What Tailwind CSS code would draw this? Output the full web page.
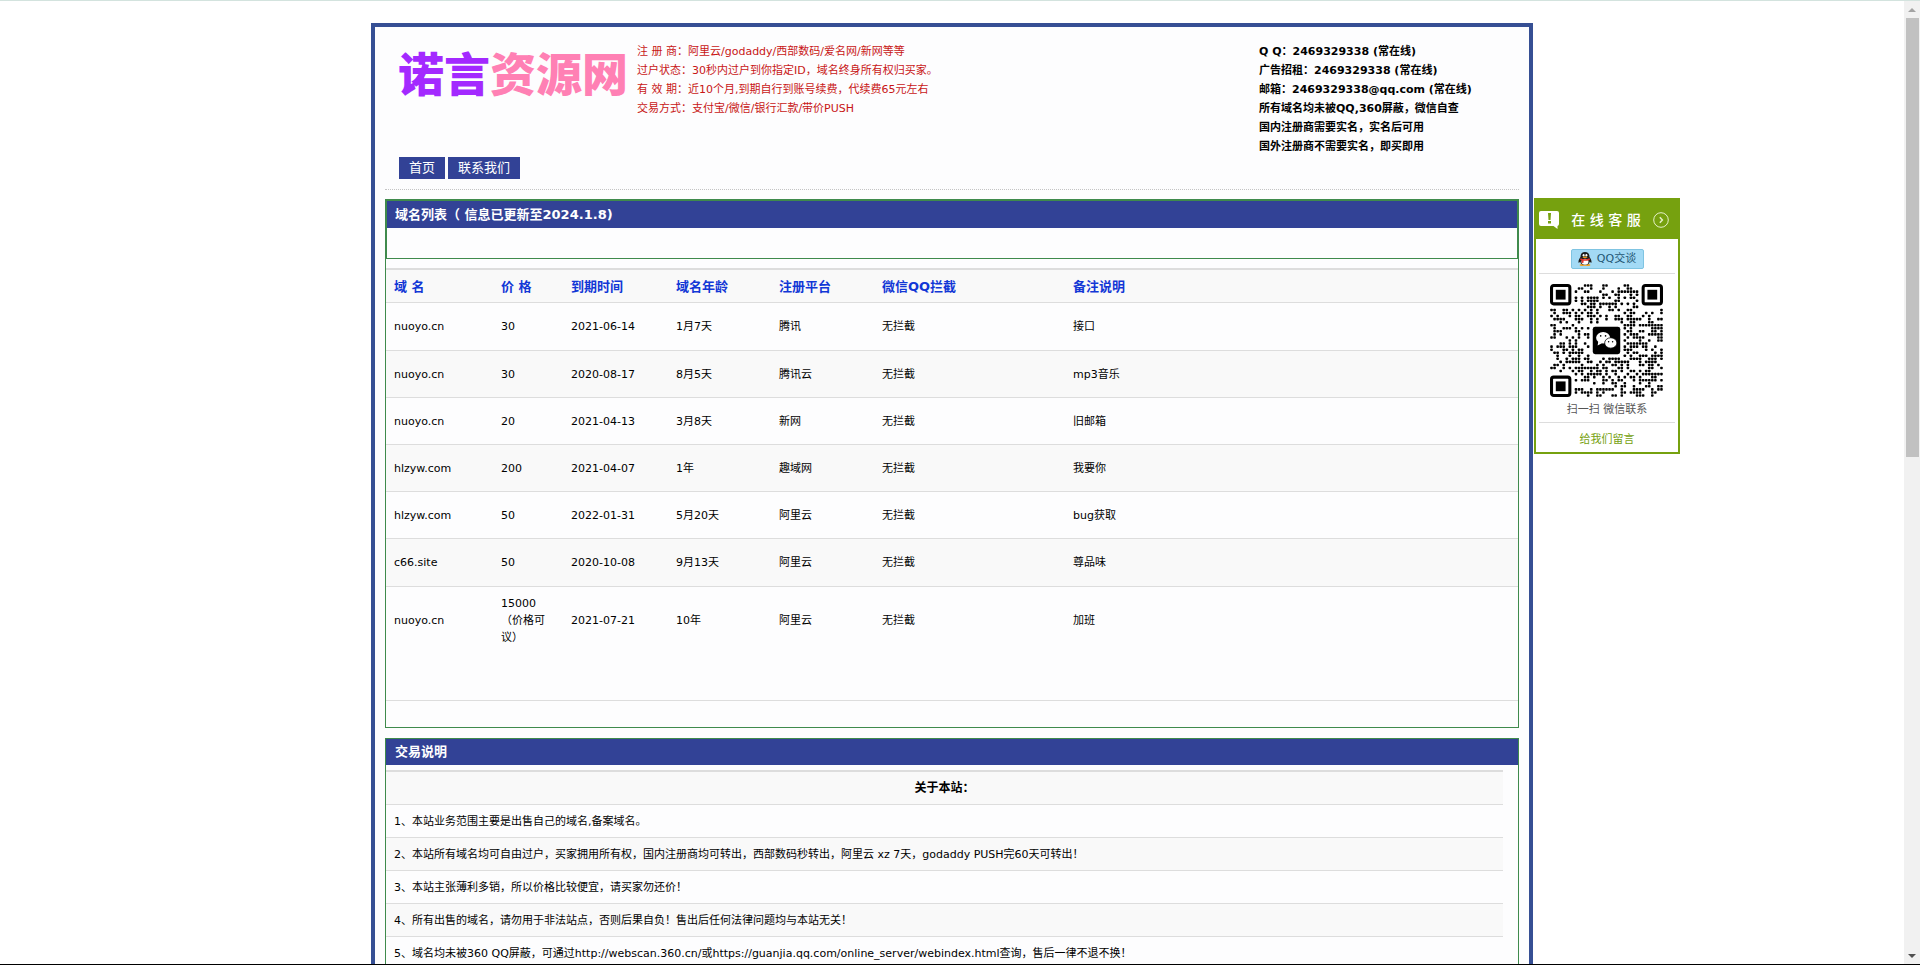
<!DOCTYPE html>
<html lang="zh-CN">
<head>
<meta charset="utf-8">
<title>诺言资源网</title>
<script src="https://cdn.jsdelivr.net/npm/@tailwindcss/browser@4"></script>
</head>
<body class="flex h-screen flex-col overflow-hidden border-t border-[#d3e3de] bg-white font-['DejaVu_Sans','Noto_Sans_CJK_SC',sans-serif] text-[11px] leading-[17px] text-black">
<div class="flex min-h-0 flex-1">
  <div class="min-w-0 flex-1 overflow-hidden pt-[22px]">
    <div class="relative mx-auto w-full max-w-[1162px] border-4 border-[#364f94] bg-[#fdfdfe] p-[10px]">
      <header class="flex h-[120px] items-start pt-[5px] pl-[13px] leading-[19px]">
        <h1 class="w-[239px] shrink-0 pt-[5px] text-[46px] leading-[56px] font-black text-[#ff80b4] whitespace-nowrap"><span class="text-[#a329ff]">诺言</span>资源网</h1>
        <div class="flex-1 text-[#c81616]">
          <p>注 册 商：阿里云/godaddy/西部数码/爱名网/新网等等</p>
          <p>过户状态：30秒内过户到你指定ID，域名终身所有权归买家。</p>
          <p>有 效 期：近10个月,到期自行到账号续费，代续费65元左右</p>
          <p>交易方式：支付宝/微信/银行汇款/带价PUSH</p>
        </div>
        <div class="w-[260px] shrink-0 font-bold whitespace-nowrap">
          <p>Q Q：2469329338 (常在线)</p>
          <p>广告招租：2469329338 (常在线)</p>
          <p>邮箱：2469329338@qq.com (常在线)</p>
          <p>所有域名均未被QQ,360屏蔽，微信自查</p>
          <p>国内注册商需要实名，实名后可用</p>
          <p>国外注册商不需要实名，即买即用</p>
        </div>
      </header>
      <nav class="flex gap-[3px] border-b border-dotted border-[#c4c4c4] pb-[10px] pl-[14px] text-[13px] leading-[22px] text-white">
        <a href="#" class="bg-[#324296] px-[10px]">首页</a>
        <a href="#" class="bg-[#324296] px-[10px]">联系我们</a>
      </nav>

      <section class="mt-[9px] border border-[#3f8a4c] pb-[26px]">
        <div class="mb-[9px] border border-[#3f8a4c] pb-[30px]">
          <h2 class="bg-[#324296] pl-2 text-[13px] leading-[27px] font-bold text-white">域名列表（ 信息已更新至2024.1.8)</h2>
        </div>
        <table class="w-full table-fixed border-separate border-spacing-0 border-t-2 border-t-[#dddddd] text-left [&_td]:border-b [&_td]:border-[#dddddd] [&_td]:px-2 [&_th]:border-b [&_th]:border-[#dddddd] [&_th]:px-2">
          <colgroup><col class="w-[107px]"><col class="w-[70px]"><col class="w-[105px]"><col class="w-[103px]"><col class="w-[103px]"><col class="w-[191px]"><col></colgroup>
          <thead>
            <tr class="h-[33px] bg-[#f9f9f9] text-[13px] text-[#1237d6]"><th>域 名</th><th>价 格</th><th>到期时间</th><th>域名年龄</th><th>注册平台</th><th>微信QQ拦截</th><th>备注说明</th></tr>
          </thead>
          <tbody>
            <tr class="h-[48px]"><td>nuoyo.cn</td><td>30</td><td>2021-06-14</td><td>1月7天</td><td>腾讯</td><td>无拦截</td><td>接口</td></tr>
            <tr class="h-[47px] bg-[#f9f9f9]"><td>nuoyo.cn</td><td>30</td><td>2020-08-17</td><td>8月5天</td><td>腾讯云</td><td>无拦截</td><td>mp3音乐</td></tr>
            <tr class="h-[47px]"><td>nuoyo.cn</td><td>20</td><td>2021-04-13</td><td>3月8天</td><td>新网</td><td>无拦截</td><td>旧邮箱</td></tr>
            <tr class="h-[47px] bg-[#f9f9f9]"><td>hlzyw.com</td><td>200</td><td>2021-04-07</td><td>1年</td><td>趣域网</td><td>无拦截</td><td>我要你</td></tr>
            <tr class="h-[47px]"><td>hlzyw.com</td><td>50</td><td>2022-01-31</td><td>5月20天</td><td>阿里云</td><td>无拦截</td><td>bug获取</td></tr>
            <tr class="h-[48px] bg-[#f9f9f9]"><td>c66.site</td><td>50</td><td>2020-10-08</td><td>9月13天</td><td>阿里云</td><td>无拦截</td><td>尊品味</td></tr>
            <tr class="h-[114px] [&>td]:pb-[46px]"><td>nuoyo.cn</td><td>15000<br>（价格可议）</td><td>2021-07-21</td><td>10年</td><td>阿里云</td><td>无拦截</td><td>加班</td></tr>
          </tbody>
        </table>
      </section>

      <section class="mt-[10px] border border-[#3f8a4c]">
        <h2 class="mb-[5px] bg-[#324296] pl-[9px] text-[13px] leading-[26px] font-bold text-white">交易说明</h2>
        <div class="pr-[15px]">
          <table class="w-full border-separate border-spacing-0 border-t-2 border-t-[#dddddd] [&_td]:border-b [&_td]:border-[#dddddd] [&_td]:px-2 [&_th]:border-b [&_th]:border-[#dddddd]">
            <thead><tr class="h-[33px] bg-[#f9f9f9] text-[12px]"><th>关于本站：</th></tr></thead>
            <tbody>
              <tr class="h-[33px]"><td>1、本站业务范围主要是出售自己的域名,备案域名。</td></tr>
              <tr class="h-[33px] bg-[#f9f9f9]"><td>2、本站所有域名均可自由过户，买家拥用所有权，国内注册商均可转出，西部数码秒转出，阿里云 xz 7天，godaddy PUSH完60天可转出！</td></tr>
              <tr class="h-[33px]"><td>3、本站主张薄利多销，所以价格比较便宜，请买家勿还价！</td></tr>
              <tr class="h-[33px] bg-[#f9f9f9]"><td>4、所有出售的域名，请勿用于非法站点，否则后果自负！售出后任何法律问题均与本站无关！</td></tr>
              <tr class="h-[33px]"><td>5、域名均未被360 QQ屏蔽，可通过http://webscan.360.cn/或https://guanjia.qq.com/online_server/webindex.html查询，售后一律不退不换！</td></tr>
            </tbody>
          </table>
        </div>
      </section>

      <aside class="absolute top-[171px] left-full ml-[5px] flex w-[146px] flex-col items-center border-2 border-t-0 border-[#76a10f] bg-white text-center text-[#555555]">
        <div class="flex h-[41px] w-full items-center justify-between bg-[#76a10f] pt-[3px] pr-[9px] pl-[3px] text-[14px] font-medium text-white">
          <svg class="size-[20px]" viewBox="0 0 20 20"><path fill="#fff" d="M2 1h16a2 2 0 0 1 2 2v11a2 2 0 0 1-1.500 1.900V19l-4-3H2a2 2 0 0 1-2-2V3a2 2 0 0 1 2-2z"/><path fill="#76a10f" d="M9 3h3l-.5 7h-2zM9 11h3v2.500H9z"/></svg>
          <span>在 线 客 服</span>
          <svg class="size-[16px]" viewBox="0 0 16 16" fill="none" stroke="#e5f0c8"><circle cx="8" cy="8" r="7.300"/><path stroke-width="1.500" d="M6.800 5.200 9.400 8l-2.600 2.800"/></svg>
        </div>
        <div class="flex h-[35px] w-[136px] items-center justify-center border-b border-[#dddddd] pt-[5px]">
          <a href="#" class="flex h-[20px] w-[73px] items-center justify-center gap-[5px] rounded-[2px] border border-[#7fc4e2] bg-[#a3daf5] text-[#1f5673]">
            <svg class="size-[14px]" viewBox="0 0 14 14"><ellipse cx="4.500" cy="13" rx="3" ry="1" fill="#f5a11a"/><ellipse cx="9.500" cy="13" rx="3" ry="1" fill="#f5a11a"/><path fill="#1c1c1c" d="M7 0c3 0 4.500 2 4.500 5 1 1.500 2.300 3.500 2 5.500-.6.600-1.300-.3-1.700-1C11.500 12 9.500 13 7 13s-4.500-1-4.800-3.500c-.4.700-1.100 1.600-1.700 1C.2 8.500 1.500 6.500 2.500 5 2.500 2 4 0 7 0z"/><ellipse cx="7" cy="9.700" rx="3.500" ry="3" fill="#fff"/><ellipse cx="5.600" cy="3.200" rx="1" ry="1.300" fill="#fff"/><ellipse cx="8.400" cy="3.200" rx="1" ry="1.300" fill="#fff"/><ellipse cx="7" cy="5.300" rx="2.500" ry=".8" fill="#f5a11a"/><path fill="#e3342f" d="M2.500 6.200C5 7.600 9 7.600 11.500 6.200l.4 1.500C10 8.700 7.500 9 5.600 8.800l-.2 2.200-1.800-.3.100-2.300-1.500-.7z"/></svg>
            <span>QQ交谈</span>
          </a>
        </div>
        <svg id="qr" class="mt-[10px] mr-[2px] size-[113px]" viewBox="0 0 37 37" role="img" aria-label="微信二维码"></svg>
        <p class="mt-[4px] w-[136px] border-b border-[#dddddd] pb-[4px]">扫一扫 微信联系</p>
        <a href="#" class="pt-[8px] pb-[4px] text-[#76a10f]">给我们留言</a>
      </aside>
    </div>
  </div>

  <div class="flex w-4 shrink-0 flex-col bg-[#f1f1f1]" aria-hidden="true">
    <svg class="h-[17px] w-4" viewBox="0 0 16 17"><path fill="#a3a3a3" d="M8 7l4 4H4z"/></svg>
    <div class="ml-[2px] h-[439px] w-[13px] bg-[#c1c1c1]"></div>
    <svg class="mt-auto h-[17px] w-4" viewBox="0 0 16 17"><path fill="#505050" d="M8 11 4 7h8z"/></svg>
  </div>
</div>
<div class="h-px shrink-0 bg-black"></div>

<script>
  // Draws the contact code: three rounded finder marks, dot modules and the chat badge.
  const n = 37, svg = document.getElementById('qr');
  const finder = (x, y) =>
    `<rect x="${x + .5}" y="${y + .5}" width="6" height="6" rx=".7" fill="none" stroke="#000" stroke-width="1"/>` +
    `<rect x="${x + 1.900}" y="${y + 1.900}" width="3.200" height="3.200" fill="#000"/>`;
  let seed = 20240108, dots = '';
  const rnd = () => (seed = (seed * 1103515245 + 12345) % 2147483648) / 2147483648;
  for (let y = 0; y < n; y++) for (let x = 0; x < n; x++) {
    const inFinder = (x < 8 && y < 8) || (x > 28 && y < 8) || (x < 8 && y > 28);
    const inBadge = x > 12 && x < 24 && y > 12 && y < 24;
    const on = rnd() < .5;
    if (!inFinder && !inBadge && on) dots += `<rect x="${x + .08}" y="${y + .08}" width=".84" height=".84" rx=".25"/>`;
  }
  svg.innerHTML = dots + finder(0, 0) + finder(30, 0) + finder(0, 30) +
    '<rect x="14" y="14" width="9" height="9" rx=".8"/>' +
    '<g fill="#fff"><ellipse cx="17.400" cy="17.600" rx="2.300" ry="1.900"/><path d="M15.800 18.800l-.2 1.300 1.400-.7z"/></g>' +
    '<g fill="#fff" stroke="#000" stroke-width=".25"><ellipse cx="19.900" cy="19.300" rx="2" ry="1.700"/></g>' +
    '<g fill="#000"><circle cx="16.600" cy="17" r=".27"/><circle cx="18.200" cy="17" r=".27"/><circle cx="19.200" cy="18.900" r=".24"/><circle cx="20.500" cy="18.900" r=".24"/></g>';
</script>
</body>
</html>
